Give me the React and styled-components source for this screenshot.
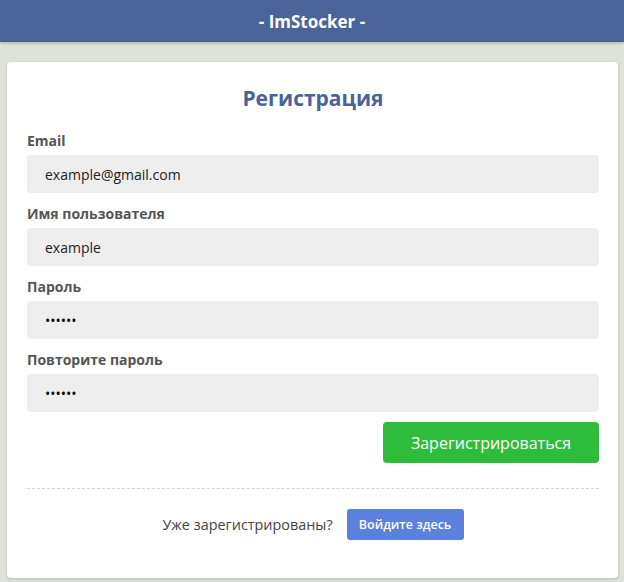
import styled, { createGlobalStyle } from 'styled-components'

const GlobalStyle = createGlobalStyle`
    html, body {
        margin: 0;
        padding: 0;
        background-color: #dee2db;
        font-family: 'Open Sans', 'Noto Sans', sans-serif;
    }

    * {
        box-sizing: border-box;
    }
`

const Page = styled.div`
    min-height: 582px;
`

const Header = styled.header`
    display: grid;
    place-items: center;

    height: 42px;
    background-color: #4a6399;
    box-shadow: 0 1px 3px rgba(0, 0, 0, 0.25);

    color: #fff;
    font-size: 17px;
    font-weight: 700;
`

const Main = styled.main`
    padding: 20px 6px 6px 7px;
`

const Card = styled.section`
    border-radius: 4px;
    padding: 21px 19px 38px 20px;
    background-color: #fff;
    box-shadow: 0 1px 3px rgba(0, 0, 0, 0.18);
`

const Title = styled.h1`
    margin: 0 0 18px;

    text-align: center;
    line-height: 30px;
    font-size: 21px;
    font-weight: 700;
    color: #4a6399;
`

const Form = styled.form`
    display: flex;
    flex-direction: column;
    row-gap: 11px;
`

const Field = styled.div``

const Label = styled.label`
    display: block;

    margin-bottom: 4px;

    line-height: 20px;
    font-size: 14px;
    font-weight: 700;
    color: #555;
`

const Input = styled.input`
    display: block;

    border: 0;
    border-radius: 4px;
    width: 100%;
    height: 38px;
    padding: 0 18px;
    background-color: #eeeeee;

    font-family: inherit;
    font-size: 14px;
    color: #222;
    outline: none;

    &[type='password'] {
        color: #000;
    }
`

const Actions = styled.div`
    display: flex;
    justify-content: end;

    margin-top: -1px;
`

const Button = styled.button`
    border: none;
    border-radius: 4px;
    font-family: inherit;
    color: #fff;
    cursor: pointer;

    &.constructive {
        height: 41px;
        width: 216px;
        background-color: #2ebd3b;
        font-size: 16px;
    }

    &.link {
        height: 31px;
        width: 117px;
        padding: 0;
        border-radius: 3px;
        background-color: #5b80de;
        font-size: 12.5px;
        font-weight: 600;
    }
`

const Divider = styled.hr`
    margin: 25px 0 20px;
    border: 0;
    border-top: 1px dashed #d4d4d4;
`

const Footer = styled.div`
    display: flex;
    align-items: center;
    justify-content: center;
    column-gap: 14px;

    font-size: 14.4px;
    color: #444;
`

export default function App() {
    return (
        <Page>
            <GlobalStyle />
            <Header>- ImStocker -</Header>
            <Main>
                <Card>
                    <Title>Регистрация</Title>
                    <Form onSubmit={e => e.preventDefault()}>
                        <Field>
                            <Label htmlFor="email">Email</Label>
                            <Input id="email" type="text" defaultValue="example@gmail.com" />
                        </Field>
                        <Field>
                            <Label htmlFor="username">Имя пользователя</Label>
                            <Input id="username" type="text" defaultValue="example" />
                        </Field>
                        <Field>
                            <Label htmlFor="password">Пароль</Label>
                            <Input id="password" type="password" defaultValue="123456" />
                        </Field>
                        <Field>
                            <Label htmlFor="password2">Повторите пароль</Label>
                            <Input id="password2" type="password" defaultValue="123456" />
                        </Field>
                        <Actions>
                            <Button className="constructive" type="submit">Зарегистрироваться</Button>
                        </Actions>
                    </Form>
                    <Divider />
                    <Footer>
                        <span>Уже зарегистрированы?</span>
                        <Button className="link" type="button">Войдите здесь</Button>
                    </Footer>
                </Card>
            </Main>
        </Page>
    )
}
